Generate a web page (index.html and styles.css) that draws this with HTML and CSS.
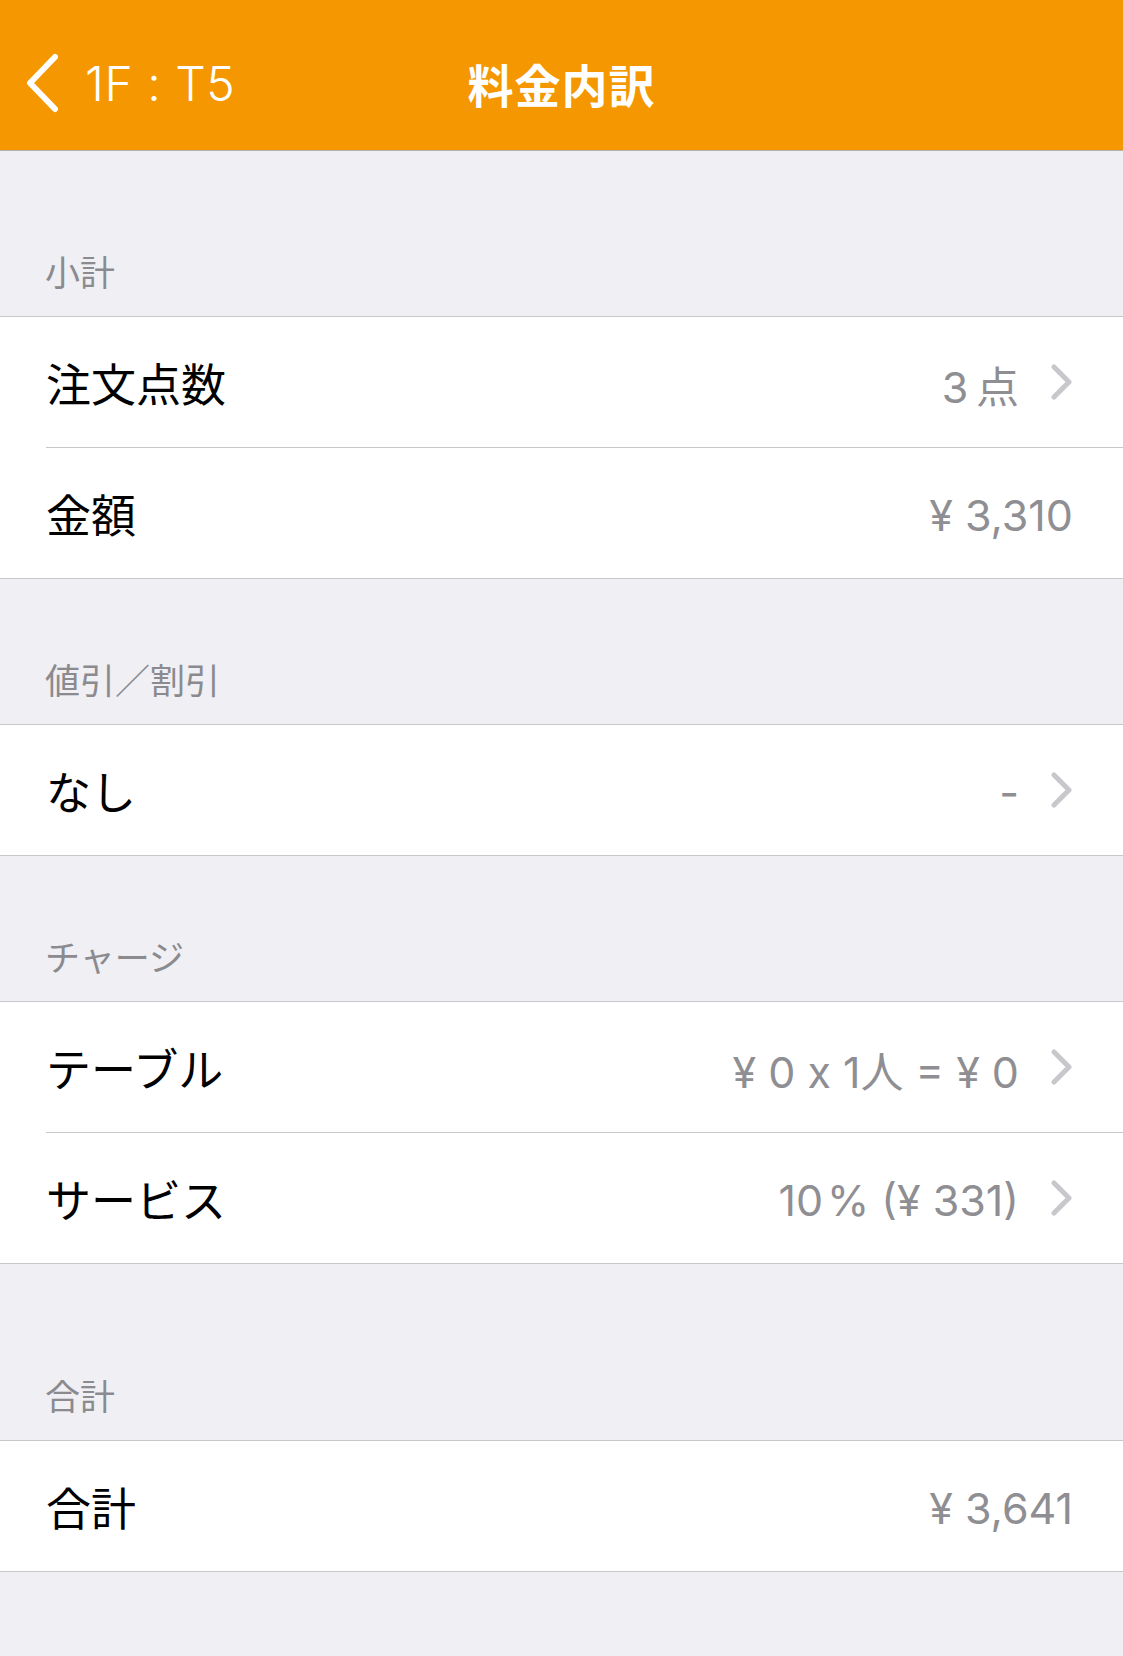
FILE: index.html
```html
<!DOCTYPE html>
<html lang="ja">
    <head>
        <meta charset="utf-8">
        <title>料金内訳</title>
        <link rel="stylesheet" href="styles.css">
    </head>
    <body>
        <header class="nav-bar">
            <a class="nav-back" href="#">
                <svg class="nav-back-icon" viewBox="0 0 36 60" width="36" height="60">
                    <path d="M31 4 L6 30 L31 56" />
                </svg>
                <span>1F : T5</span>
            </a>
            <h1 class="nav-title">料金内訳</h1>
            <span></span>
        </header>

        <main class="table-view">
            <section class="group group-first">
                <h2 class="group-title">小計</h2>
                <ul class="cells">
                    <li class="cell">
                        <div class="cell-body">
                            <span class="cell-label">注文点数</span>
                            <span class="cell-value">3&#8201;点</span>
                            <svg class="chevron" viewBox="0 0 22 36"><path d="M3 3 L18 18 L3 33" /></svg>
                        </div>
                    </li>
                    <li class="cell">
                        <div class="cell-body">
                            <span class="cell-label">金額</span>
                            <span class="cell-value">¥ 3,310</span>
                        </div>
                    </li>
                </ul>
            </section>

            <section class="group">
                <h2 class="group-title">値引／割引</h2>
                <ul class="cells">
                    <li class="cell">
                        <div class="cell-body">
                            <span class="cell-label">なし</span>
                            <span class="cell-value">-</span>
                            <svg class="chevron" viewBox="0 0 22 36"><path d="M3 3 L18 18 L3 33" /></svg>
                        </div>
                    </li>
                </ul>
            </section>

            <section class="group">
                <h2 class="group-title">チャージ</h2>
                <ul class="cells">
                    <li class="cell">
                        <div class="cell-body">
                            <span class="cell-label">テーブル</span>
                            <span class="cell-value">¥ 0 x 1人 = ¥ 0</span>
                            <svg class="chevron" viewBox="0 0 22 36"><path d="M3 3 L18 18 L3 33" /></svg>
                        </div>
                    </li>
                    <li class="cell">
                        <div class="cell-body">
                            <span class="cell-label">サービス</span>
                            <span class="cell-value">10&#8202;% (¥ 331)</span>
                            <svg class="chevron" viewBox="0 0 22 36"><path d="M3 3 L18 18 L3 33" /></svg>
                        </div>
                    </li>
                </ul>
            </section>

            <section class="group group-total">
                <h2 class="group-title">合計</h2>
                <ul class="cells">
                    <li class="cell">
                        <div class="cell-body">
                            <span class="cell-label">合計</span>
                            <span class="cell-value">¥ 3,641</span>
                        </div>
                    </li>
                </ul>
            </section>
        </main>
    </body>
</html>
```

FILE: styles.css
```css
* {
	box-sizing: border-box;
}

body {
	margin: 0;
	min-height: 1656px;
	background-color: #efeff4;
	font-family: "Noto Sans CJK JP", "Noto Sans", sans-serif;
	color: #000;
}

/* navigation bar */

.nav-bar {
	display: grid;
	grid-template-columns: 1fr auto 1fr;
	align-items: center;
	height: 151px;
	padding-top: 16px;
	background-color: #f59700;
	border-bottom: 1px solid #b0b0b0;
}

.nav-back {
	display: flex;
	align-items: center;
	gap: 25px;
	padding-left: 24px;
	color: #fff;
	text-decoration: none;
	font-family: "Inter", "Noto Sans", sans-serif;
	font-size: 48px;
	font-weight: 300;
	letter-spacing: 0.5px;
}

.nav-back-icon path {
	fill: none;
	stroke: #fff;
	stroke-width: 6;
	stroke-linecap: round;
	stroke-linejoin: round;
}

.nav-title {
	margin: 0;
	color: #fff;
	font-size: 46px;
	font-weight: 700;
	letter-spacing: 1px;
}

/* grouped table */

.group-title {
	display: flex;
	align-items: flex-end;
	height: 145px;
	margin: 0;
	padding: 0 45px 24px;
	color: #8a8a8f;
	font-size: 35px;
	font-weight: 400;
	line-height: 1.2;
}

.group-first .group-title {
	height: 165px;
}

.group-total .group-title {
	height: 176px;
}

.cells {
	list-style: none;
	margin: 0;
	padding: 0;
	background-color: #fff;
	border-top: 1px solid #c8c7cc;
	border-bottom: 1px solid #c8c7cc;
}

.cell {
	padding-left: 46px;
}

.cell + .cell .cell-body {
	border-top: 1px solid #c8c7cc;
}

.cell-body {
	display: flex;
	align-items: center;
	height: 131px;
	padding-right: 50px;
}

.cell:first-child .cell-body {
	height: 130px;
}

.cell-label {
	flex: 1;
	font-size: 45px;
}

.cell-value {
	color: #8e8e93;
	font-family: "Inter", "Noto Sans CJK JP", sans-serif;
	font-size: 43px;
	font-weight: 400;
	padding-top: 4px;
}

.chevron {
	width: 22px;
	height: 36px;
	margin-left: 32px;
}

.chevron path {
	fill: none;
	stroke: #c7c7cc;
	stroke-width: 5;
	stroke-linecap: round;
	stroke-linejoin: round;
}
```
